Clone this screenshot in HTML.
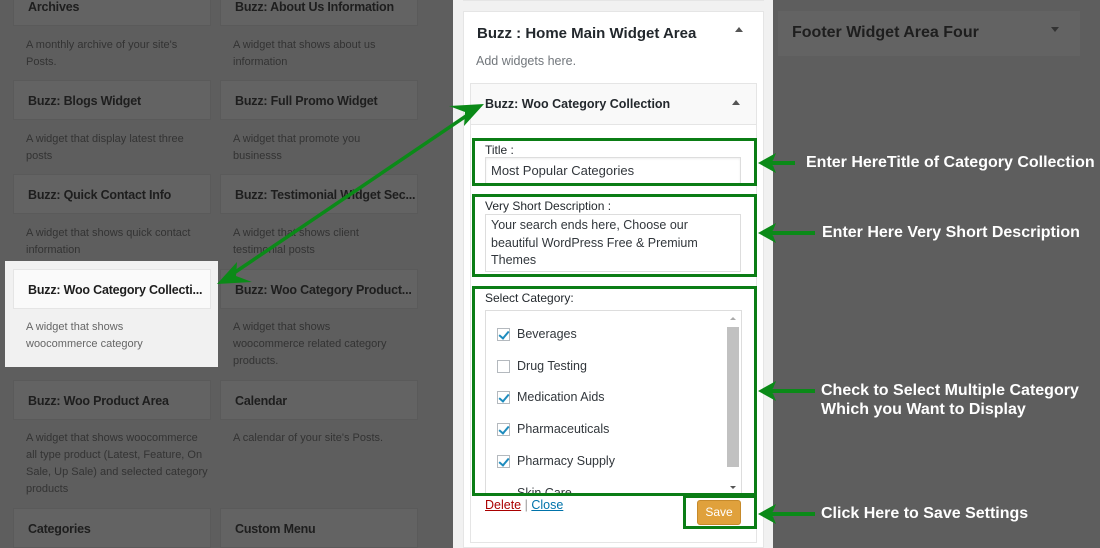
<!DOCTYPE html>
<html><head><meta charset="utf-8"><style>
*{margin:0;padding:0;box-sizing:border-box}
html,body{width:1100px;height:548px;overflow:hidden}
body{background:#5e5e5e;position:relative;font-family:"Liberation Sans",Arial,sans-serif}
.a{position:absolute}
.wb{position:absolute;background:#636363;border:1px solid #5a5a5a;color:#1e1e1e;font-size:12.5px;letter-spacing:-0.2px;font-weight:bold;padding:0 0 0 14px;line-height:40px;width:198px;height:40px;white-space:nowrap;overflow:hidden}
.wd{position:absolute;color:#333;font-size:11px;line-height:17px;width:168px}
.ann{position:absolute;color:#fff;font-weight:bold;font-size:16px;white-space:nowrap}
.gb{position:absolute;border:3px solid #0b7d15}
.cb{position:absolute;left:497px;width:13px;height:13px;border:1px solid #b4b9be;background:#fff}
.cb.c::after{content:"";position:absolute;left:3px;top:0px;width:4px;height:8px;border:solid #1e8cbe;border-width:0 2px 2px 0;transform:rotate(40deg)}
.cl{position:absolute;left:517px;font-size:12.5px;color:#32373c}
</style></head><body>
<div class="wb" style="left:13px;top:-14px">Archives</div>
<div class="wb" style="left:220px;top:-14px">Buzz: About Us Information</div>
<div class="wd" style="left:26px;top:37px">A monthly archive of your site's Posts.</div>
<div class="wd" style="left:233px;top:37px">A widget that shows about us information</div>
<div class="wb" style="left:13px;top:80px">Buzz: Blogs Widget</div>
<div class="wb" style="left:220px;top:80px">Buzz: Full Promo Widget</div>
<div class="wd" style="left:26px;top:131px">A widget that display latest three posts</div>
<div class="wd" style="left:233px;top:131px">A widget that promote you businesss</div>
<div class="wb" style="left:13px;top:174px">Buzz: Quick Contact Info</div>
<div class="wb" style="left:220px;top:174px">Buzz: Testimonial Widget Sec...</div>
<div class="wd" style="left:26px;top:225px">A widget that shows quick contact information</div>
<div class="wd" style="left:233px;top:225px">A widget that shows client testimonial posts</div>
<div class="a" style="left:5px;top:261px;width:213px;height:106px;background:#f1f1f1"></div>
<div class="wb" style="left:13px;top:269px;background:#fafafa;border-color:#e5e5e5">Buzz: Woo Category Collecti...</div>
<div class="wd" style="left:26px;top:319px;color:#666;width:120px">A widget that shows woocommerce category</div>
<div class="wb" style="left:220px;top:269px">Buzz: Woo Category Product...</div>
<div class="wd" style="left:233px;top:319px">A widget that shows woocommerce related category products.</div>
<div class="wb" style="left:13px;top:380px">Buzz: Woo Product Area</div>
<div class="wb" style="left:220px;top:380px">Calendar</div>
<div class="wd" style="left:26px;top:430px;width:182px">A widget that shows woocommerce all type product (Latest, Feature, On Sale, Up Sale) and selected category products</div>
<div class="wd" style="left:233px;top:430px">A calendar of your site's Posts.</div>
<div class="wb" style="left:13px;top:508px">Categories</div>
<div class="wb" style="left:220px;top:508px">Custom Menu</div>
<div class="a" style="left:778px;top:11px;width:302px;height:45px;background:#636363;color:#1e1e1e;font-size:16px;font-weight:bold;padding:13px 14px">Footer Widget Area Four</div>
<div class="a" style="left:1051px;top:27px;border-left:4px solid transparent;border-right:4px solid transparent;border-top:5px solid #333"></div>
<div class="a" style="left:453px;top:0;width:320px;height:548px;background:#f1f1f1"></div>
<div class="a" style="left:463px;top:-5px;width:301px;height:6px;background:#fff;border:1px solid #e5e5e5"></div>
<div class="a" style="left:463px;top:11px;width:301px;height:537px;background:#fff;border:1px solid #e5e5e5"></div>
<div class="a" style="left:477px;top:25px;font-size:15px;font-weight:bold;color:#23282d">Buzz : Home Main Widget Area</div>
<div class="a" style="left:735px;top:27px;border-left:4px solid transparent;border-right:4px solid transparent;border-bottom:5px solid #555"></div>
<div class="a" style="left:476px;top:54px;font-size:12.5px;color:#72777c">Add widgets here.</div>
<div class="a" style="left:470px;top:83px;width:287px;height:460px;background:#fff;border:1px solid #e5e5e5"></div>
<div class="a" style="left:471px;top:84px;width:285px;height:41px;background:#f9f9f9;border-bottom:1px solid #e5e5e5"></div>
<div class="a" style="left:485px;top:97px;font-size:12.5px;font-weight:bold;color:#23282d">Buzz: Woo Category Collection</div>
<div class="a" style="left:732px;top:100px;border-left:4px solid transparent;border-right:4px solid transparent;border-bottom:5px solid #555"></div>
<div class="a" style="left:485px;top:143px;font-size:12px;color:#23282d">Title :</div>
<div class="a" style="left:485px;top:157px;width:256px;height:27px;border:1px solid #ddd;box-shadow:inset 0 1px 2px rgba(0,0,0,.07);font-size:13px;color:#32373c;padding:5px 5px">Most Popular Categories</div>
<div class="a" style="left:485px;top:199px;font-size:12px;color:#23282d">Very Short Description :</div>
<div class="a" style="left:485px;top:214px;width:256px;height:58px;border:1px solid #ddd;font-size:12.5px;line-height:17.5px;color:#32373c;padding:2px 5px">Your search ends here, Choose our beautiful WordPress Free &amp; Premium Themes</div>
<div class="a" style="left:485px;top:291px;font-size:12px;color:#23282d">Select Category:</div>
<div class="a" style="left:485px;top:310px;width:257px;height:184px;border:1px solid #ddd"></div>
<div class="a" style="left:727px;top:327px;width:12px;height:140px;background:#c1c1c1"></div>
<div class="a" style="left:730px;top:317px;border-left:3px solid transparent;border-right:3px solid transparent;border-bottom:3px solid #aaa"></div>
<div class="a" style="left:730px;top:486px;border-left:3px solid transparent;border-right:3px solid transparent;border-top:3px solid #555"></div>
<div class="cb c" style="top:328px"></div><div class="cl" style="top:327px">Beverages</div>
<div class="cb" style="top:360px"></div><div class="cl" style="top:359px">Drug Testing</div>
<div class="cb c" style="top:391px"></div><div class="cl" style="top:390px">Medication Aids</div>
<div class="cb c" style="top:423px"></div><div class="cl" style="top:422px">Pharmaceuticals</div>
<div class="cb c" style="top:455px"></div><div class="cl" style="top:454px">Pharmacy Supply</div>
<div class="cl" style="top:486px;height:8px;overflow:hidden">Skin Care</div>
<div class="a" style="left:485px;top:498px;font-size:12.5px"><span style="color:#a00;text-decoration:underline">Delete</span> <span style="color:#999">|</span> <span style="color:#0073aa;text-decoration:underline">Close</span></div>
<div class="a" style="left:697px;top:500px;width:44px;height:25px;background:#e0a13c;border:1px solid #c68a2b;border-radius:3px;color:#fff;font-size:12px;text-align:center;line-height:23px">Save</div>
<div class="gb" style="left:472px;top:138px;width:285px;height:48px"></div>
<div class="gb" style="left:472px;top:194px;width:285px;height:83px"></div>
<div class="gb" style="left:472px;top:286px;width:285px;height:210px"></div>
<div class="gb" style="left:683px;top:495px;width:74px;height:34px"></div>
<div class="ann" style="left:806px;top:154px">Enter HereTitle of Category Collection</div>
<div class="ann" style="left:822px;top:224px">Enter Here Very Short Description</div>
<div class="ann" style="left:821px;top:382px">Check to Select Multiple Category</div>
<div class="ann" style="left:821px;top:401px">Which you Want to Display</div>
<div class="ann" style="left:821px;top:505px">Click Here to Save Settings</div>
<svg class="a" style="left:0;top:0" width="1100" height="548">
<g stroke="#0b8a18" stroke-width="4" fill="#0b8a18">
<line x1="795" y1="163" x2="770" y2="163"/><polygon points="758,163 776,153 772,163 776,173" stroke="none"/>
<line x1="815" y1="233" x2="770" y2="233"/><polygon points="758,233 776,223 772,233 776,243" stroke="none"/>
<line x1="815" y1="391" x2="770" y2="391"/><polygon points="758,391 776,381 772,391 776,401" stroke="none"/>
<line x1="815" y1="514" x2="770" y2="514"/><polygon points="758,514 776,504 772,514 776,524" stroke="none"/>
<line x1="228" y1="277" x2="472" y2="112" stroke-width="3.5"/>
<polygon points="217,284 237,262 236,276 252,282" stroke="none"/>
<polygon points="484,104 464,126 465,112 449,106" stroke="none"/>
</g></svg>
</body></html>
